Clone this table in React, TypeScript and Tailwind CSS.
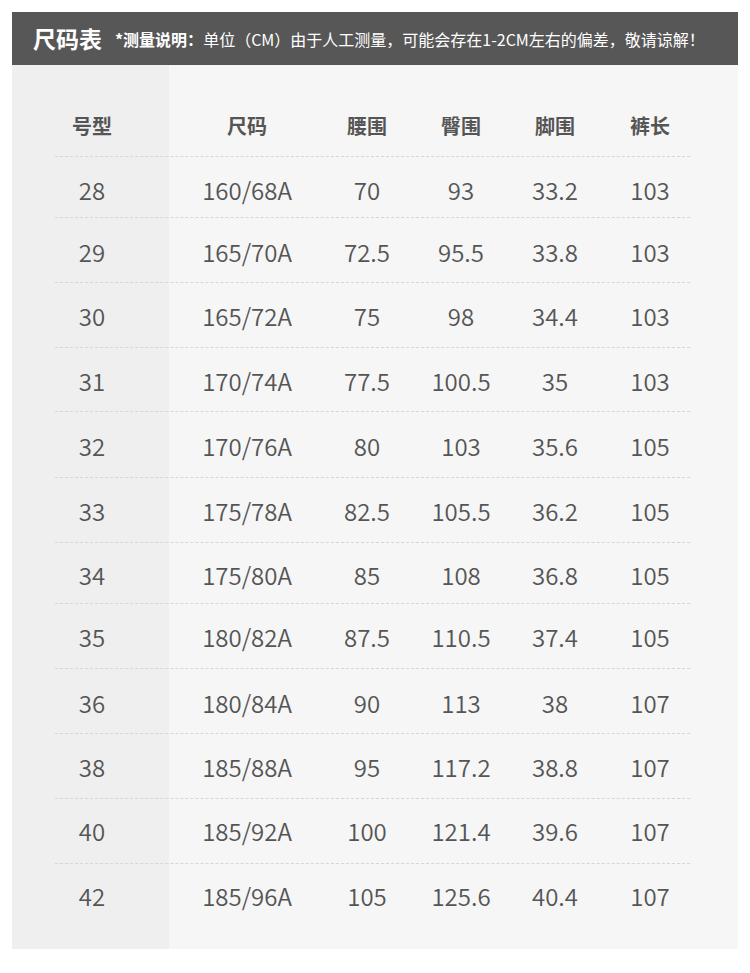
import React from "react";

const rows: { cells: string[]; h: string }[] = [
  { cells: ["28", "160/68A", "70", "93", "33.2", "103"], h: "h-[60px] pt-[6px]" },
  { cells: ["29", "165/70A", "72.5", "95.5", "33.8", "103"], h: "h-[64px] pt-[4px]" },
  { cells: ["30", "165/72A", "75", "98", "34.4", "103"], h: "h-[64px] pt-[2px]" },
  { cells: ["31", "170/74A", "77.5", "100.5", "35", "103"], h: "h-[63px] pt-[2px]" },
  { cells: ["32", "170/76A", "80", "103", "35.6", "105"], h: "h-[65px] pt-[2px]" },
  { cells: ["33", "175/78A", "82.5", "105.5", "36.2", "105"], h: "h-[64px] pt-[2px]" },
  { cells: ["34", "175/80A", "85", "108", "36.8", "105"], h: "h-[60px] pt-[4px]" },
  { cells: ["35", "180/82A", "87.5", "110.5", "37.4", "105"], h: "h-[64px] pt-[2px]" },
  { cells: ["36", "180/84A", "90", "113", "38", "107"], h: "h-[64px] pt-[4px]" },
  { cells: ["38", "185/88A", "95", "117.2", "38.8", "107"], h: "h-[64px] pt-[2px]" },
  { cells: ["40", "185/92A", "100", "121.4", "39.6", "107"], h: "h-[64px] pt-[0px]" },
  { cells: ["42", "185/96A", "105", "125.6", "40.4", "107"], h: "h-[64px] pt-[0px]" },
];

const heads = ["号型", "尺码", "腰围", "臀围", "脚围", "裤长"];

const grid = "grid grid-cols-[160px_150px_90px_98px_90px_100px] w-[688px]";

export default function App() {
  return (
    <div
      className="w-[750px] h-[973px] bg-white pt-[12px] px-[12px]"
      style={{ fontFamily: '"Noto Sans CJK SC", "Noto Sans", sans-serif' }}
    >
      <div className="h-[53px] bg-[#575757] flex items-center pl-[21px] text-white">
        <span className="text-[23px] font-bold leading-none">尺码表</span>
        <span className="ml-[13px] text-[16px] leading-none">
          <span className="font-bold">*测量说明：</span>单位（CM）由于人工测量，可能会存在1-2CM左右的偏差，敬请谅解！
        </span>
      </div>
      <div className="h-[884px] bg-[linear-gradient(to_right,#efefef_157px,#f6f6f6_157px)] text-[#555555]">
        <div className={`${grid} h-[91px] pt-[30px] items-center`}>
          {heads.map((h) => (
            <div key={h} className="text-center text-[20px] font-bold leading-none text-[#555555]">
              {h}
            </div>
          ))}
        </div>
        {rows.map((r, i) => (
          <div key={i}>
            <div className="ml-[43px] w-[635px] border-t border-dashed border-[#d6d6d6]" />
            <div className={`${grid} ${r.h} items-center`}>
              {r.cells.map((c, j) => (
                <div key={j} className="text-center text-[24px] leading-none font-[350]">
                  {c}
                </div>
              ))}
            </div>
          </div>
        ))}
      </div>
    </div>
  );
}
